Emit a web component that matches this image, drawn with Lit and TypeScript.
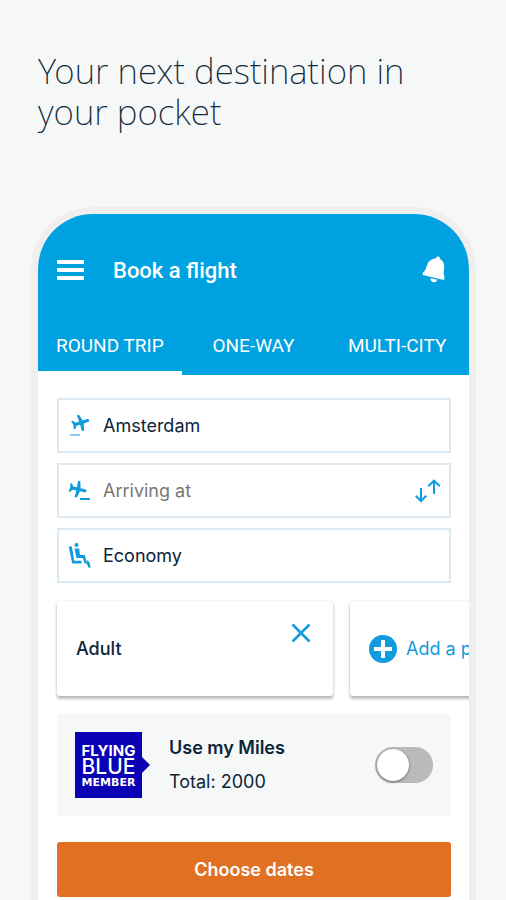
import { LitElement, html, css, svg } from "lit";
import { customElement, state } from "lit/decorators.js";
import { classMap } from "lit/directives/class-map.js";

const plane = svg`<path d="M22 10.500c0-1-1-1.700-2-1.700h-5.500L12.500 1H9.800l.4 7.600H5.800L3.500 5.500H1.300l1.200 5-1.200 5h2.200l2.300-3h4.400l-.4 8h2.700l2-8H20c1 0 2-.8 2-2z"/>`;

const departIcon = html`<svg class="icon" viewBox="0 0 24 24" aria-hidden="true">
  <g transform="translate(2 0) rotate(-18 9 9) scale(.85)">${plane}</g>
  <rect x="1" y="20" width="10" height="2" opacity=".5" />
</svg>`;

const arriveIcon = html`<svg class="icon" viewBox="0 0 24 24" aria-hidden="true">
  <g transform="translate(-1 1) rotate(12 9 9) scale(.85)">${plane}</g>
  <rect x="11" y="19" width="10" height="2" />
</svg>`;

const seatIcon = html`<svg class="icon" viewBox="0 0 24 24" aria-hidden="true">
  <circle cx="7.500" cy="1" r="2" />
  <path d="M5.500 4.500h4.700l.8 6.500h4.800l2.200 8.500h-2.500l-1.600-5.500H7.500z" />
  <path d="M-.3 2.500h3.200L5.200 16.700H12.500v2.800H3.200z" />
  <path d="M18 16l2.300 2 1.500 5.500h-2.500l-.8-2.700-1-1z" />
</svg>`;

@customElement("app-root")
export class AppRoot extends LitElement {
  @state() private trip = 0;
  @state() private from = "Amsterdam";
  @state() private to = "";

  static styles = css`
    :host {
      display: flex;
      flex-direction: column;
      box-sizing: border-box;
      min-height: 100vh;
      padding: 50px 30px 0 31px;
      background: #f6f8f8;
      color: #0b2439;
      font-family: Inter, "Liberation Sans", sans-serif;
      font-size: 18px;
      overflow: hidden;
    }
    *, *::before {
      box-sizing: border-box;
    }
    button, input, select {
      margin: 0;
      padding: 0;
      border: 0;
      background: none;
      color: inherit;
      font: inherit;
    }
    button {
      cursor: pointer;
    }
    svg {
      display: block;
    }
    .headline {
      margin: 0 0 75px;
      padding-left: 7px;
      max-width: 400px;
      color: #12283b;
      font: 200 35px/41px "Noto Sans", sans-serif;
    }
    .phone {
      flex: 1;
      border: 7px solid #f0efed;
      border-bottom: 0;
      border-radius: 62px 62px 0 0;
      background: #fff;
    }
    .screen {
      border-radius: 55px 55px 0 0;
      overflow: hidden;
    }
    .top {
      background: #00a1e1;
      color: #fff;
      font-family: Roboto, sans-serif;
    }
    .bar {
      display: flex;
      align-items: center;
      height: 112px;
      padding: 0 22px 0 19px;
    }
    .title {
      flex: 1;
      margin: 0 0 0 29px;
      font-size: 22px;
      font-weight: 500;
    }
    .tabs {
      display: grid;
      grid-template-columns: repeat(3, 1fr);
      height: 49px;
    }
    .tab {
      padding-bottom: 6px;
      border-bottom: 4px solid transparent;
      font-size: 19px;
      white-space: nowrap;
    }
    .tab.on {
      border-bottom-color: #fff;
    }
    .form {
      display: flex;
      flex-direction: column;
      gap: 18px;
      padding: 23px 18px 3px 19px;
    }
    .fields {
      display: grid;
      gap: 10px;
    }
    .field {
      display: flex;
      align-items: center;
      gap: 10px;
      height: 55px;
      padding: 0 9px 0 10px;
      border: 2px solid #dbeaf3;
    }
    .icon {
      flex: none;
      width: 24px;
      height: 24px;
      fill: #109bdc;
      overflow: visible;
    }
    .control {
      flex: 1;
      min-width: 0;
      height: 100%;
      outline: 0;
      appearance: none;
    }
    .control::placeholder {
      color: #777;
      opacity: 1;
    }
    .line {
      fill: none;
      stroke: #109bdc;
      stroke-width: 2;
    }
    .people {
      display: flex;
      gap: 17px;
      margin: -4px -18px -6px -4px;
      padding: 4px 0 6px 4px;
      overflow: hidden;
    }
    .card {
      flex: none;
      display: flex;
      height: 95px;
      padding: 0 19px;
      border-radius: 3px;
      background: #fff;
      box-shadow: 0 3px 3px rgba(0, 0, 0, 0.25), 0 0 3px rgba(0, 0, 0, 0.12);
    }
    .person {
      width: 67%;
      align-items: center;
      justify-content: space-between;
      padding-right: 22px;
      font-weight: 500;
    }
    .remove {
      align-self: flex-start;
      margin-top: 22px;
    }
    .add {
      align-items: center;
      gap: 9px;
      color: #109bdc;
      white-space: nowrap;
    }
    .miles {
      display: flex;
      align-items: center;
      height: 102px;
      padding: 0 18px;
      background: #f6f8f8;
    }
    .logo {
      position: relative;
      display: flex;
      flex-direction: column;
      align-items: center;
      justify-content: center;
      width: 67px;
      height: 66px;
      padding-top: 2px;
      background: #0a00b4;
      color: #fff;
      white-space: nowrap;
    }
    .logo::after {
      content: "";
      position: absolute;
      left: 100%;
      top: 25px;
      border: solid transparent;
      border-width: 8px 0 8px 8px;
      border-left-color: #0a00b4;
    }
    .flying {
      font-size: 15px;
      line-height: 14px;
      font-weight: 700;
    }
    .blue {
      font-size: 21px;
      line-height: 18px;
      font-weight: 500;
    }
    .member {
      font: 700 11px/13px "DejaVu Sans", sans-serif;
    }
    .info {
      flex: 1;
      display: grid;
      gap: 10px;
      margin-left: 27px;
      line-height: 24px;
    }
    .use {
      font-weight: 600;
    }
    .switch {
      appearance: none;
      width: 58px;
      height: 36px;
      padding: 2px;
      border-radius: 18px;
      background: #b9bbbb;
      cursor: pointer;
    }
    .switch::before {
      content: "";
      display: block;
      width: 32px;
      height: 32px;
      border-radius: 50%;
      background: #fff;
      box-shadow: 0 1px 3px rgba(0, 0, 0, 0.45);
    }
    .switch:checked {
      background: #109bdc;
    }
    .switch:checked::before {
      margin-left: auto;
    }
    .choose {
      height: 55px;
      margin-top: 8px;
      border-radius: 3px;
      background: #e07122;
      color: #fff;
      font-weight: 600;
    }
  `;

  render() {
    return html`
      <h1 class="headline">Your next destination in your pocket</h1>
      <main class="phone">
        <div class="screen">
          <header class="top">
            <div class="bar">
              <button aria-label="Menu">
                <svg width="27" height="20" viewBox="0 0 27 20" fill="#fff">
                  <path d="M0 0h27v4H0zM0 8h27v4H0zM0 16h27v4H0z" />
                </svg>
              </button>
              <h2 class="title">Book a flight</h2>
              <button aria-label="Notifications">
                <svg width="26" height="28" viewBox="0 0 26 28" fill="#fff">
                  <path d="M17.500.500c1.200.3 1.700 1.300 1.500 2.500 3.300 1.800 4.600 5 4.200 8.500-.5 4-.9 7.500.3 9.200l-.4 3.300L1.600 19l.3-2.500c2.300-1.400 3-3.700 4-7C7 5.700 9.800 3 14.800 2.200 15.300 1 16.300.2 17.500.5z" />
                  <path d="M9.500 22.300l6.800 1.500c-.7 2-2.100 2.800-3.900 2.400-1.900-.4-3-1.900-2.900-3.900z" />
                </svg>
              </button>
            </div>
            <div class="tabs" role="tablist">
              ${["ROUND TRIP", "ONE-WAY", "MULTI-CITY"].map(
                (name, i) => html`<button
                  role="tab"
                  aria-selected=${this.trip === i ? "true" : "false"}
                  class=${classMap({ tab: true, on: this.trip === i })}
                  @click=${() => (this.trip = i)}
                >${name}</button>`
              )}
            </div>
          </header>
          <form class="form" @submit=${(e: Event) => e.preventDefault()}>
            <div class="fields">
              <div class="field">
                <label for="from">${departIcon}</label>
                <input id="from" class="control" aria-label="Departing from" .value=${this.from} />
              </div>
              <div class="field">
                <label for="to">${arriveIcon}</label>
                <input id="to" class="control" aria-label="Arriving at" placeholder="Arriving at" .value=${this.to} />
                <button type="button" aria-label="Swap airports">
                  <svg class="line" width="25" height="24" viewBox="0 0 25 24">
                    <path d="M6 9v13M.700 16.700L6 22l5.300-5.300M19 15V2M13.200 7.300L19 1.700l5.800 5.600" />
                  </svg>
                </button>
              </div>
              <div class="field">
                <label for="cabin">${seatIcon}</label>
                <select id="cabin" class="control" aria-label="Cabin class">
                  <option>Economy</option>
                </select>
              </div>
            </div>
            <div class="people">
              <div class="card person">
                <span>Adult</span>
                <button type="button" class="remove" aria-label="Remove adult">
                  <svg class="line" width="20" height="20" viewBox="0 0 20 20">
                    <path d="M1.500 1.500l17 17M18.500 1.500l-17 17" stroke-width="2.500" />
                  </svg>
                </button>
              </div>
              <button type="button" class="card add">
                <svg width="28" height="28" viewBox="0 0 28 28">
                  <circle cx="14" cy="14" r="14" fill="#109bdc" />
                  <path d="M14 5v18M5 14h18" stroke="#fff" stroke-width="4" />
                </svg>
                Add a passenger
              </button>
            </div>
            <div class="miles">
              <div class="logo">
                <span class="flying">FLYING</span>
                <span class="blue">BLUE</span>
                <span class="member">MEMBER</span>
              </div>
              <div class="info">
                <label class="use" for="miles">Use my Miles</label>
                <span>Total: 2000</span>
              </div>
              <input id="miles" class="switch" type="checkbox" role="switch" />
            </div>
            <button class="choose">Choose dates</button>
          </form>
        </div>
      </main>
    `;
  }
}
